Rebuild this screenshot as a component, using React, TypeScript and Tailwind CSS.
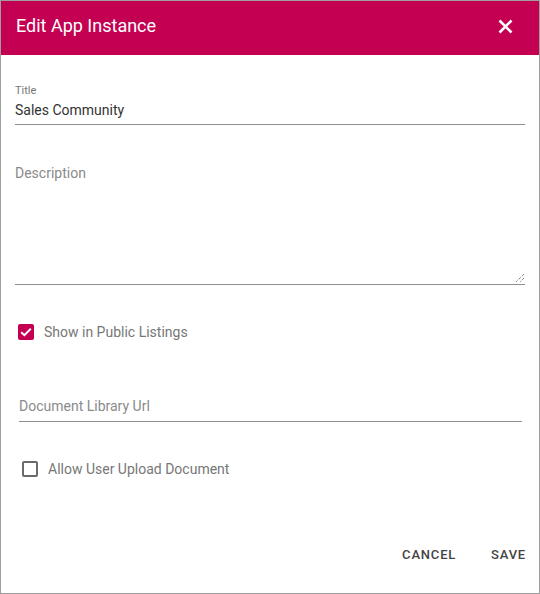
import React from "react";

export default function App() {
  return (
    <div
      className="w-[540px] h-[594px] border border-[#9e9e9e] bg-white flex flex-col"
      style={{ fontFamily: "Roboto, 'Liberation Sans', sans-serif" }}
    >
      <div className="h-[54px] bg-[#c40052] flex items-center justify-between pl-[15px] pr-[26px] pb-[4px] shrink-0">
        <span className="text-white text-[18px] leading-[24px]">Edit App Instance</span>
        <svg width="15" height="15" viewBox="0 0 15 15" className="block">
          <path d="M1.5 1.5 L13.5 13.5 M13.5 1.5 L1.5 13.5" stroke="white" strokeWidth="2.6" strokeLinecap="butt" />
        </svg>
      </div>

      <div className="flex flex-col">
        <div className="mt-[30px] mx-[14px] border-b border-[#8f8f8f] pb-[4px]">
          <div className="text-[11px] leading-[12px] text-[#777]">Title</div>
          <div className="mt-[3px] text-[14px] leading-[20px] text-[#333]">Sales Community</div>
        </div>

        <div className="mt-[38px] mx-[14px] h-[122px] border-b border-[#8f8f8f] relative">
          <div className="text-[14px] leading-[20px] text-[#8a8a8a]">Description</div>
          <svg width="10" height="10" viewBox="0 0 10 10" className="absolute right-0 bottom-[1px]">
            <path d="M9 1 L1 9 M9 5 L5 9" stroke="#555" strokeWidth="1" strokeDasharray="1 1" />
          </svg>
        </div>

        <div className="mt-[37px] ml-[17px] flex items-center h-[20px]">
          <div className="w-[16px] h-[16px] rounded-[2px] bg-[#c40052] flex items-center justify-center">
            <svg width="14" height="14" viewBox="0 0 14 14">
              <path d="M2.2 7.2 L5.4 10.2 L11.8 3.8" stroke="white" strokeWidth="2" fill="none" />
            </svg>
          </div>
          <span className="ml-[10px] text-[14px] leading-[20px] text-[#777]">Show in Public Listings</span>
        </div>

        <div className="mt-[54px] ml-[18px] mr-[17px] border-b border-[#8f8f8f] pb-[5px]">
          <div className="text-[14px] leading-[20px] text-[#8a8a8a]">Document Library Url</div>
        </div>

        <div className="mt-[37px] ml-[21px] flex items-center h-[20px]">
          <div className="w-[16px] h-[16px] rounded-[2px] border-2 border-[#6a6a6a]" />
          <span className="ml-[10px] text-[14px] leading-[20px] text-[#777]">Allow User Upload Document</span>
        </div>

        <div className="mt-[66px] flex justify-end pr-[13px] gap-[35px] text-[13px] leading-[20px] font-medium tracking-[0.8px] text-[#444]">
          <span>CANCEL</span>
          <span>SAVE</span>
        </div>
      </div>
    </div>
  );
}
